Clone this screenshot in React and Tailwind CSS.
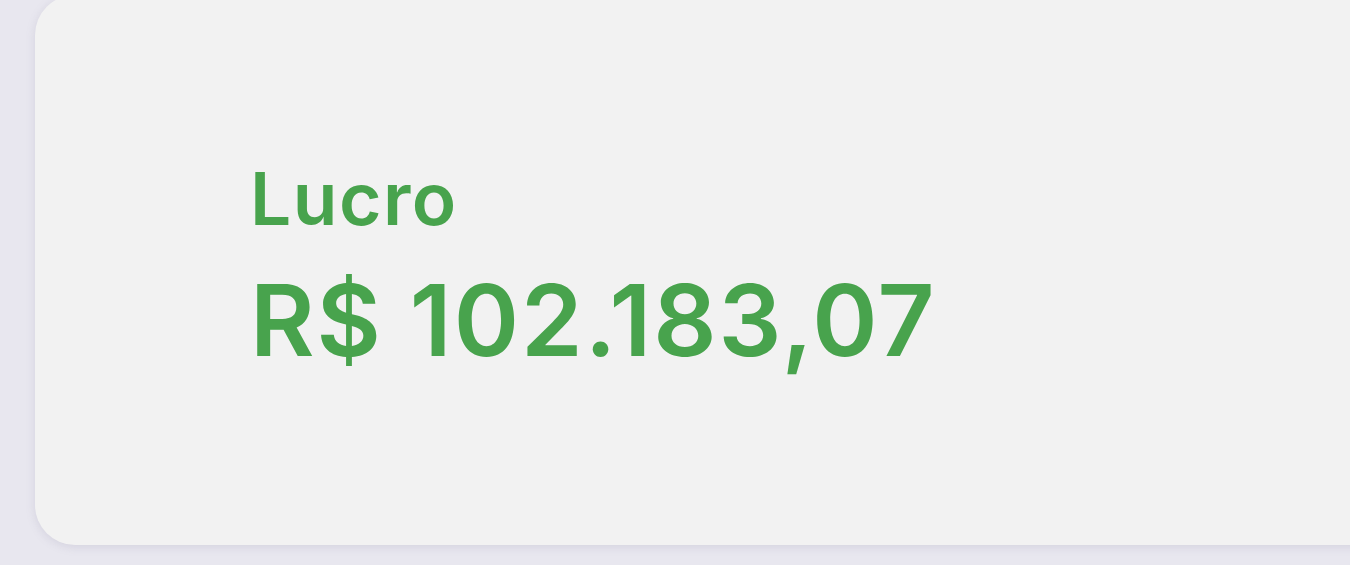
export default function App() {
  return (
    <div className="h-[565px] w-full overflow-hidden bg-[#e8e7ef] pl-[35px]" style={{ fontFamily: "Inter, 'Noto Sans', sans-serif" }}>
      <div className="-mt-[5px] h-[550px] w-[1400px] rounded-[40px] bg-[#f2f2f2] pl-[215px] pt-[167px] shadow-[0_2px_10px_rgba(120,115,150,0.18)]">
        <p className="text-[73px] font-semibold leading-none tracking-[0.02em] text-[#48a34d]">Lucro</p>
        <p className="mt-[36px] text-[99px] font-semibold leading-none tracking-[0.02em] text-[#48a34d]">
          R$ 102.183,07
        </p>
      </div>
    </div>
  );
}
